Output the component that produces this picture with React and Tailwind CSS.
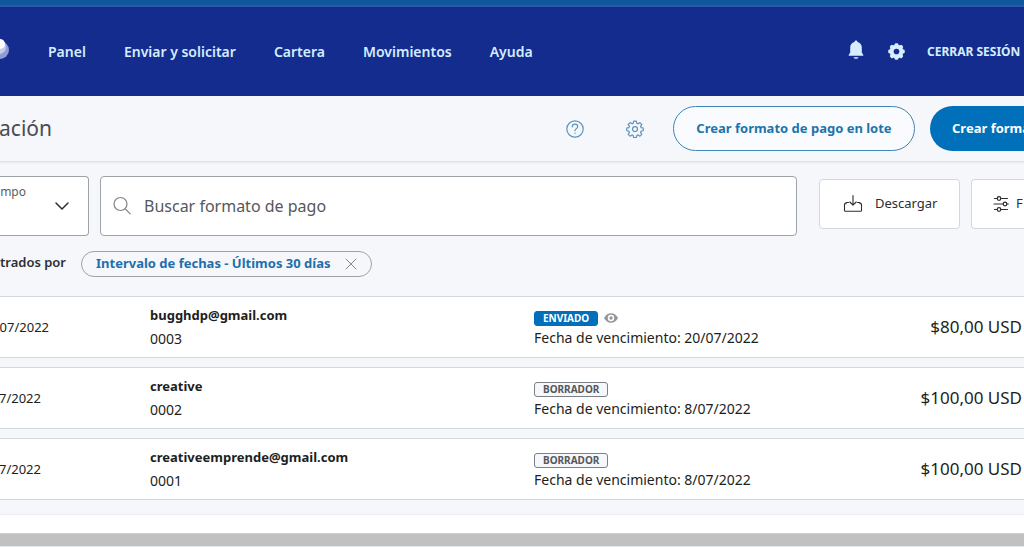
const navItems = ['Panel', 'Enviar y solicitar', 'Cartera', 'Movimientos', 'Ayuda']

const invoices = [
  { id: '0003', date: '07/2022', client: 'bugghdp@gmail.com', sent: true, due: '20/07/2022', amount: '$80,00 USD' },
  { id: '0002', date: '7/2022', client: 'creative', sent: false, due: '8/07/2022', amount: '$100,00 USD' },
  { id: '0001', date: '7/2022', client: 'creativeemprende@gmail.com', sent: false, due: '8/07/2022', amount: '$100,00 USD' },
]

export default function App() {
  return (
    <div className="overflow-hidden bg-[#f5f7fb] font-['Noto_Sans','Open_Sans',sans-serif] text-[#2c2e2f]">
      <TopNav />
      <PageHeader />
      <main>
        <SearchBar />
        <ActiveFilters />
        <InvoiceTable />
      </main>
      <footer className="mt-[5px] border-t border-[#eceef1] bg-white pt-[18px]">
        <div className="h-[13px] border-t border-[#d0d0d0] bg-[#c1c1c1]" />
        <div className="h-px bg-[#e3e6ee]" />
      </footer>
    </div>
  )
}

function TopNav() {
  return (
    <header className="border-t-5 border-[#11579b]">
      <div className="flex h-[91px] items-center border-t-2 border-[#2d57a8] bg-[#142c8e] text-[#d5edff]">
        <a href="#" aria-label="Inicio" className="mr-[39px] mb-1.5 block">
          <LogoMark className="h-5 w-[9px]" />
        </a>
        <nav className="flex flex-1 gap-[38px]">
          {navItems.map((item) => (
            <a key={item} href="#" className="text-sm font-semibold whitespace-nowrap">{item}</a>
          ))}
        </nav>
        <div className="flex w-[176px] shrink-0 items-center whitespace-nowrap">
          <button aria-label="Notificaciones" className="mb-1 mr-6">
            <BellIcon className="h-5 w-4" />
          </button>
          <button aria-label="Configuración" className="mr-[22px]">
            <SolidGearIcon className="h-[17px] w-[17px]" />
          </button>
          <a href="#" className="text-xs font-bold">CERRAR SESIÓN</a>
        </div>
      </div>
    </header>
  )
}

function PageHeader() {
  return (
    <div className="flex h-[66px] items-center border-b border-[#dfe2e7] shadow-[0_1px_2px_rgba(0,0,0,0.06)]">
      <div className="flex flex-1">
        <h1 className="flex w-[52px] justify-end text-[21px] text-[#4a4c4f]">ración</h1>
      </div>
      <button aria-label="Ayuda" className="mr-[42px] text-[#5b95bf]">
        <HelpIcon className="h-[18px] w-[18px]" />
      </button>
      <button aria-label="Ajustes" className="mr-[29px] text-[#5b95bf]">
        <GearIcon className="h-[18px] w-[18px]" />
      </button>
      <button className="mr-[15px] h-[45px] w-[242px] rounded-full border border-[#3f86b5] bg-[#f9fbfe] text-[13px] font-bold whitespace-nowrap text-[#1d74ac]">
        Crear formato de pago en lote
      </button>
      <button className="h-[45px] w-[94px] shrink-0 rounded-l-full bg-[#0070ba] pl-[22px] text-left text-[13px] font-bold whitespace-nowrap text-white">
        Crear forma
      </button>
    </div>
  )
}

function SearchBar() {
  return (
    <div className="flex items-center pt-3.5">
      <div className="relative mr-[11px] h-[60px] w-[89px] shrink-0 rounded-r border border-l-0 border-[#9da3a6] bg-white">
        <label htmlFor="period" className="flex w-[26px] justify-end pt-[7px] text-xs text-[#5b5e61]">mpo</label>
        <select id="period" className="absolute inset-0 h-full w-full appearance-none">
          <option></option>
        </select>
        <ChevronIcon className="pointer-events-none absolute top-[24px] left-[54px] h-2.5 w-4" />
      </div>
      <div className="mr-[22px] flex h-[60px] flex-1 items-center rounded border border-[#9da3a6] bg-white pl-[11px]">
        <SearchIcon className="mr-3 h-5 w-5 text-[#7d8184]" />
        <input
          type="search"
          aria-label="Buscar formato de pago"
          placeholder="Buscar formato de pago"
          className="min-w-0 flex-1 text-base outline-none placeholder:text-[#55585b]"
        />
      </div>
      <button className="mr-[11px] mb-1 flex h-[50px] w-[141px] shrink-0 items-center rounded border border-[#d3d8e0] bg-white pl-[23px] text-[13px]">
        <DownloadIcon className="mr-3 h-5 w-5" />
        Descargar
      </button>
      <button className="mb-1 flex h-[50px] w-[53px] shrink-0 items-center rounded-l border border-r-0 border-[#d3d8e0] bg-white pl-[21px] text-[13px]">
        <FilterIcon className="mr-[7px] h-4 w-4 shrink-0" />
        F
      </button>
    </div>
  )
}

function ActiveFilters() {
  return (
    <div className="flex items-center pt-[15px]">
      <p className="mr-[15px] flex w-[66px] justify-end pb-1 text-[13px] leading-5 font-semibold whitespace-nowrap">trados por</p>
      <button className="flex h-[26px] items-center rounded-full border border-[#9da3a6] px-3.5 text-[13px] font-bold text-[#1d6fae]">
        Intervalo de fechas - Últimos 30 días
        <CloseIcon className="ml-[15px] h-3 w-3 text-[#7d8a97]" />
      </button>
    </div>
  )
}

function InvoiceTable() {
  return (
    <table className="mt-2.5 w-full border-separate border-spacing-x-0 border-spacing-y-[9px] text-sm leading-6 text-[#1c1e20]">
      <tbody>
        {invoices.map((invoice) => (
          <tr key={invoice.id} className="h-[62px] bg-white">
            <td className="w-[150px] border-y border-[#d3d8de] p-0">
              <div className="w-[49px] text-[13px]">
                <span className={invoice.sent ? 'flex justify-end' : 'flex justify-end pr-2'}>{invoice.date}</span>
              </div>
            </td>
            <td className="w-[384px] border-y border-[#d3d8de] p-0">
              <p className="text-[13px] leading-6 font-bold">{invoice.client}</p>
              <p>{invoice.id}</p>
            </td>
            <td className="border-y border-[#d3d8de] p-0 pb-0.5">
              <div className="flex h-[23px] items-center gap-1.5 pt-1">
                <StatusBadge sent={invoice.sent} />
                {invoice.sent && <EyeIcon className="h-3 w-3.5 text-[#94979c]" />}
              </div>
              <p className="leading-5">Fecha de vencimiento: {invoice.due}</p>
            </td>
            <td className="border-y border-[#d3d8de] p-0 pr-0.5 text-right text-[17px]">{invoice.amount}</td>
          </tr>
        ))}
      </tbody>
    </table>
  )
}

function StatusBadge({ sent }) {
  if (sent) {
    return <span className="rounded-[3px] border border-[#0070ba] bg-[#0070ba] px-2 text-[10px] leading-[13px] font-bold text-white">ENVIADO</span>
  }
  return <span className="rounded-[3px] border border-[#7b8086] bg-[#f5f7fa] px-2 text-[10px] leading-[13px] font-bold text-[#54585c]">BORRADOR</span>
}

function LogoMark({ className }) {
  return (
    <svg className={className} viewBox="0 0 9 20" aria-hidden="true">
      <circle cx="0" cy="11" r="9" fill="#8d9cd4" />
      <circle cx="-1" cy="8" r="7" fill="#c5cde9" />
      <circle cx="0" cy="5" r="5" fill="#fff" />
    </svg>
  )
}

function BellIcon({ className }) {
  return (
    <svg className={className} viewBox="0 0 16 20" fill="currentColor" aria-hidden="true">
      <path d="M8 .5c.9 0 1.400.6 1.500 1.400 2.700.7 4.300 2.700 4.300 5.300v5.300l1.500 2.500v.8H.7V15l1.500-2.500V7.200c0-2.600 1.600-4.600 4.300-5.300C6.600 1.100 7.100.5 8 .5Z" />
      <path d="M5.500 17.300h5c-.4 1-1.300 1.500-2.500 1.500s-2.100-.5-2.500-1.500Z" />
    </svg>
  )
}

function SolidGearIcon({ className }) {
  return (
    <svg className={className} viewBox="0 0 18 18" aria-hidden="true">
      <g fill="currentColor">
        <circle cx="9" cy="9" r="7.300" />
        <rect x="7" y="0.200" width="4" height="17.600" rx="1.500" />
        <rect x="7" y="0.200" width="4" height="17.600" rx="1.500" transform="rotate(45 9 9)" />
        <rect x="7" y="0.200" width="4" height="17.600" rx="1.500" transform="rotate(90 9 9)" />
        <rect x="7" y="0.200" width="4" height="17.600" rx="1.500" transform="rotate(135 9 9)" />
      </g>
      <circle cx="9" cy="9" r="3" fill="#142c8e" />
    </svg>
  )
}

function GearIcon({ className }) {
  return (
    <svg className={className} viewBox="0 0 24 24" fill="none" stroke="currentColor" strokeWidth="1.600" strokeLinejoin="round" aria-hidden="true">
      <path d="M10.200 1.500h3.600l.6 2.900 1.700.7 2.500-1.700 2.500 2.500-1.700 2.500.7 1.700 2.900.6v3.600l-2.900.6-.7 1.700 1.700 2.500-2.500 2.500-2.500-1.700-1.700.7-.6 2.900h-3.600l-.6-2.900-1.700-.7-2.500 1.700-2.500-2.500 1.700-2.500-.7-1.700-2.900-.6v-3.600l2.900-.6.700-1.700-1.700-2.500 2.500-2.500 2.500 1.700 1.700-.7z" />
      <circle cx="12" cy="12" r="3.300" />
    </svg>
  )
}

function HelpIcon({ className }) {
  return (
    <svg className={className} viewBox="0 0 18 18" fill="none" stroke="currentColor" strokeWidth="1.200" strokeLinecap="round" aria-hidden="true">
      <circle cx="9" cy="9" r="8.200" />
      <path d="M6.300 6.800C6.300 5.200 7.500 4.200 9 4.200s2.700 1 2.700 2.500c0 1.900-2.700 2-2.700 4M9 13v.3" />
    </svg>
  )
}

function ChevronIcon({ className }) {
  return (
    <svg className={className} viewBox="0 0 16 10" fill="none" stroke="currentColor" strokeWidth="1.500" strokeLinecap="round" strokeLinejoin="round" aria-hidden="true">
      <path d="m2 2 6 6 6-6" />
    </svg>
  )
}

function SearchIcon({ className }) {
  return (
    <svg className={className} viewBox="0 0 20 20" fill="none" stroke="currentColor" strokeWidth="1.200" strokeLinecap="round" aria-hidden="true">
      <circle cx="8.500" cy="8" r="6.500" />
      <path d="m13.200 12.800 5 5" />
    </svg>
  )
}

function CloseIcon({ className }) {
  return (
    <svg className={className} viewBox="0 0 12 12" fill="none" stroke="currentColor" strokeLinecap="round" aria-hidden="true">
      <path d="m1 1 10 10M11 1 1 11" />
    </svg>
  )
}

function DownloadIcon({ className }) {
  return (
    <svg className={className} viewBox="0 0 20 20" fill="none" stroke="currentColor" strokeWidth="1.100" strokeLinecap="round" strokeLinejoin="round" aria-hidden="true">
      <path d="M5.500 8.500H3v1.200H1.500v6.800c0 .5.300.8.800.8h15.400c.5 0 .8-.3.800-.8V9.700H17V8.500h-2.500" />
      <path d="M10 1.500v9.500M6.800 8l3.200 3.200L13.200 8" />
    </svg>
  )
}

function FilterIcon({ className }) {
  return (
    <svg className={className} viewBox="0 0 16 16" fill="none" stroke="currentColor" strokeWidth="1.200" strokeLinecap="round" aria-hidden="true">
      <path d="M1.500 2.500H4M8 2.500h6.500M1 8h9M14 8h1.300M1.500 13.500H4M8 13.500h6.500" />
      <circle cx="6" cy="2.500" r="1.800" />
      <circle cx="12" cy="8" r="1.800" />
      <circle cx="6" cy="13.500" r="1.800" />
    </svg>
  )
}

function EyeIcon({ className }) {
  return (
    <svg className={className} viewBox="0 0 14 12" aria-hidden="true">
      <path d="M0 6c1.500-3 4-4.800 7-4.800S12.500 3 14 6c-1.500 3-4 4.800-7 4.800S1.500 9 0 6Z" fill="currentColor" />
      <circle cx="7" cy="6" r="3.200" fill="#fff" />
      <circle cx="7" cy="6" r="1.700" fill="currentColor" />
    </svg>
  )
}
